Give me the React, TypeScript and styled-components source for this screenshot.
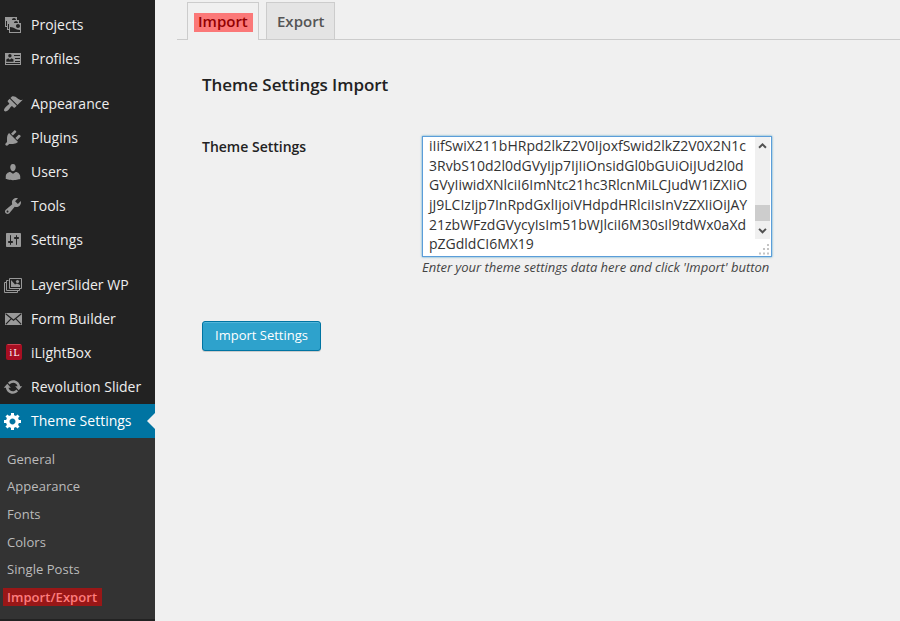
import React from "react";
import styled, { createGlobalStyle } from "styled-components";

const GlobalStyle = createGlobalStyle`
  * { box-sizing: border-box; }
  body {
    margin: 0;
    background: #f0f0f0;
    font-family: "Open Sans", sans-serif;
    color: #333;
    overflow: hidden;
  }
`;

const Page = styled.div`
  display: flex;
  width: 900px;
  height: 621px;
  overflow: hidden;
`;

const Sidebar = styled.nav`
  flex: 0 0 155px;
  background: #222;
  padding-top: 8px;
`;

const MenuGroup = styled.div`
  & + & { margin-top: 11px; }
`;

const MenuItem = styled.a<{ $active?: boolean }>`
  position: relative;
  display: flex;
  align-items: center;
  height: 34px;
  padding-left: 3px;
  gap: 8px;
  font-size: 14px;
  line-height: 18px;
  white-space: nowrap;
  color: ${(p) => (p.$active ? "#fff" : "#eee")};
  background: ${(p) => (p.$active ? "#0074a2" : "transparent")};
  svg {
    flex: none;
    color: ${(p) => (p.$active ? "#fff" : "#999")};
  }
`;

const Pointer = styled.span`
  position: absolute;
  right: 0;
  top: 9px;
  border: 8px solid transparent;
  border-left-width: 0;
  border-right-color: #f0f0f0;
`;

const Submenu = styled.div`
  height: 181px;
  padding: 7px 3px 0;
  background: #333;
`;

const SubItem = styled.a<{ $current?: boolean }>`
  display: flex;
  align-items: center;
  height: 27.6px;
  font-size: 13px;
  line-height: 18px;
  letter-spacing: 0.05px;
  font-weight: ${(p) => (p.$current ? 600 : 400)};
  color: ${(p) => (p.$current ? "#ff7d7d" : "#bbb")};
  span {
    padding: 0 5px 0 4px;
    background: ${(p) => (p.$current ? "#991717" : "transparent")};
  }
`;

const Main = styled.main`
  flex: 1;
  padding: 2px 0 0 22px;
`;

const Tabs = styled.div`
  display: flex;
  gap: 7px;
  height: 38px;
  padding-left: 10px;
  border-bottom: 1px solid #ccc;
`;

const Tab = styled.a<{ $active?: boolean }>`
  width: ${(p) => (p.$active ? 72 : 69)}px;
  height: ${(p) => (p.$active ? 38 : 37)}px;
  display: flex;
  padding: ${(p) => (p.$active ? "10px 0 0 6px" : "9px 0 0 10px")};
  border: 1px solid #ccc;
  border-bottom: 0;
  background: ${(p) => (p.$active ? "#f0f0f0" : "#e4e4e4")};
  color: ${(p) => (p.$active ? "#930000" : "#555")};
  font-size: 15px;
  font-weight: 600;
  line-height: 19px;
`;

const TabMark = styled.span`
  width: 59px;
  height: 19px;
  line-height: 17px;
  padding: 0 4px;
  background: #fb7878;
`;

const Form = styled.section`
  padding: 33px 0 0 25px;
`;

const Title = styled.h3`
  margin: 0;
  font-size: 17px;
  font-weight: 600;
  line-height: 24px;
  letter-spacing: -0.05px;
  color: #222;
`;

const FieldRow = styled.div`
  display: flex;
  margin-top: 39px;
`;

const Label = styled.label`
  width: 220px;
  font-size: 14px;
  font-weight: 600;
  line-height: 21px;
  color: #222;
`;

const TextBox = styled.div`
  display: flex;
  justify-content: space-between;
  width: 350px;
  height: 121px;
  border: 1px solid #5b9dd9;
  box-shadow: 0 0 2px rgba(30, 140, 190, 0.8);
  background: #fff;
  overflow: hidden;
`;

const TextLines = styled.div`
  margin-top: -0.85px;
  padding-left: 6px;
  font-size: 14px;
  line-height: 19.6px;
  white-space: pre;
  color: #333;
`;

const ScrollSide = styled.div`
  flex: none;
  width: 16px;
  display: flex;
  flex-direction: column;
`;

const ScrollTrack = styled.div`
  width: 15px;
  height: 102px;
  display: flex;
  flex-direction: column;
  background: #f0f0f0;
`;

const Thumb = styled.div`
  margin-top: 50px;
  height: 17px;
  background: #cdcdcd;
`;

const Hint = styled.div`
  font-size: 13px;
  font-style: italic;
  line-height: 20px;
  letter-spacing: -0.02px;
  color: #444;
  white-space: nowrap;
`;

const Button = styled.button`
  display: block;
  width: 119px;
  height: 30px;
  margin-top: 44px;
  padding: 0 0 2px;
  border: 1px solid #0074a2;
  border-radius: 3px;
  background: #2ea2cc;
  box-shadow: inset 0 1px 0 rgba(120, 200, 230, 0.5), 0 1px 0 rgba(0, 0, 0, 0.15);
  color: #fff;
  font: 13px "Open Sans", sans-serif;
`;

type IconName =
  | "projects" | "profiles" | "appearance" | "plugins" | "users" | "tools"
  | "settings" | "layers" | "mail" | "ilightbox" | "refresh" | "gear";

const solidPaths: Partial<Record<IconName, string>> = {
  projects:
    "M4 15v-3H2V2h12v3h2v3h2v10H6v-3H4zm7-12c-1.1 0-2 .9-2 2h4c0-1.1-.89-2-2-2zm-7 8V6H3v5h1zm7-3h4c0-1.1-.89-2-2-2-1.1 0-2 .9-2 2zm-5 6V9H5v5h1zm9-1c1.1 0 2-.89 2-2 0-1.1-.9-2-2-2s-2 .9-2 2c0 1.11.9 2 2 2zm2 4v-2c-5 0-5-3-10-3v5h10z",
  appearance:
    "M14.48 11.06L7.41 3.99l1.5-1.5c.5-.56 2.3-.47 3.51.32 1.21.8 1.43 1.28 2.91 2.1 1.18.64 2.45 1.26 4.45.85zm-.71.71L6.7 4.7 4.93 6.47c-.39.39-.39 1.02 0 1.41l1.06 1.06c.39.39.39 1.03 0 1.42-.6.6-1.43 1.11-2.21 1.69-.35.26-.7.53-1.01.84C1.43 14.23.4 16.08 1.4 17.07c.99 1 2.84-.03 4.18-1.36.31-.31.58-.66.85-1.02.57-.78 1.08-1.61 1.69-2.21.39-.39 1.02-.39 1.41 0l1.06 1.06c.39.39 1.02.39 1.41 0z",
  plugins:
    "M13.11 4.36L9.87 7.6 8 5.73l3.24-3.24c.35-.34 1.05-.2 1.56.32.52.51.66 1.21.31 1.55zm-8 1.77l.91-1.12 9.01 9.01-1.19.84c-.71.71-2.63 1.16-3.82 1.16H6.14L4.9 17.26c-.59.59-1.54.59-2.12 0-.59-.58-.59-1.53 0-2.12l1.24-1.24v-3.88c0-1.13.4-3.19 1.09-3.89zm7.26 3.97l3.24-3.24c.34-.35 1.04-.21 1.55.31.52.51.66 1.21.31 1.55l-3.24 3.25z",
  users:
    "M10 9.25c-2.27 0-2.73-3.44-2.73-3.44C7 4.02 7.82 2 9.97 2c2.16 0 2.98 2.02 2.71 3.81 0 0-.41 3.44-2.68 3.44zm0 2.57L12.72 10c2.39 0 4.52 2.33 4.52 4.53v2.49s-3.65 1.13-7.24 1.13c-3.65 0-7.24-1.13-7.24-1.13v-2.49c0-2.25 1.94-4.48 4.47-4.48z",
  tools:
    "M16.68 9.77c-1.34 1.34-3.3 1.67-4.95.99l-5.41 6.52c-.99.99-2.59.99-3.58 0s-.99-2.59 0-3.57l6.52-5.42c-.68-1.65-.35-3.61.99-4.95 1.28-1.28 3.12-1.62 4.72-1.06l-2.89 2.89 2.82 2.82 2.86-2.87c.53 1.58.18 3.39-1.08 4.65zM3.81 16.21c.4.39 1.04.39 1.43 0 .4-.4.4-1.04 0-1.43-.39-.4-1.03-.4-1.43 0-.39.39-.39 1.03 0 1.43z",
  settings:
    "M18 16V4c0-.55-.45-1-1-1H4c-.55 0-1 .45-1 1v12c0 .55.45 1 1 1h13c.55 0 1-.45 1-1zM8 11h1c.55 0 1 .45 1 1s-.45 1-1 1H8v1.5c0 .28-.22.5-.5.5s-.5-.22-.5-.5V13H6c-.55 0-1-.45-1-1s.45-1 1-1h1V5.5c0-.28.22-.5.5-.5s.5.22.5.5V11zm5-2h-1c-.55 0-1-.45-1-1s.45-1 1-1h1V5.5c0-.28.22-.5.5-.5s.5.22.5.5V7h1c.55 0 1 .45 1 1s-.45 1-1 1h-1v5.5c0 .28-.22.5-.5.5s-.5-.22-.5-.5V9z",
  refresh:
    "M10.2 3.28c3.53 0 6.43 2.61 6.92 6h2.08l-3.5 4-3.5-4h2.32c-.45-1.97-2.21-3.45-4.32-3.45-1.45 0-2.73.71-3.54 1.78L4.95 5.66C6.23 4.2 8.11 3.28 10.2 3.28zm-.4 13.44c-3.52 0-6.43-2.61-6.92-6H.8l3.5-4c1.17 1.33 2.33 2.67 3.5 4H5.48c.45 1.97 2.21 3.45 4.32 3.45 1.45 0 2.73-.71 3.54-1.78l1.71 1.95c-1.28 1.46-3.15 2.38-5.25 2.38z",
  gear:
    "M18 12h-2.18c-.17.7-.44 1.35-.81 1.93l1.54 1.54-2.1 2.1-1.54-1.54c-.58.36-1.23.63-1.91.79V19H8v-2.18c-.68-.16-1.33-.43-1.91-.79l-1.54 1.54-2.12-2.12 1.54-1.54c-.36-.58-.63-1.23-.79-1.91H1V9.03h2.17c.16-.7.44-1.35.8-1.94L2.43 5.55l2.1-2.1 1.54 1.54c.58-.37 1.24-.64 1.93-.81V2h3v2.18c.68.16 1.33.43 1.91.79l1.54-1.54 2.12 2.12-1.54 1.54c.36.59.64 1.24.8 1.94H18V12zm-8.5 1.5c1.66 0 3-1.34 3-3s-1.34-3-3-3-3 1.34-3 3 1.34 3 3 3z",
};

const bg = "#222";

const drawings: Partial<Record<IconName, React.ReactNode>> = {
  profiles: (
    <>
      <path d="M2 4h16v12H2z" fill="currentColor" />
      <circle cx="6.9" cy="6.8" r="1.7" fill={bg} />
      <path d="M3.3 12.8v-2.4l2-1.2 1.6 1.6 1.6-1.6 2 1.2v2.4zM11 6h6v1h-6zM12 9h5v1h-5zM12 12h5v1h-5zM3 14h14v1H3z" fill={bg} />
    </>
  ),
  layers: (
    <>
      <path d="M3.5 7.5h-2v10h13v-2M5.5 5.5h-2v10h13v-2" fill="none" stroke="currentColor" />
      <path d="M6.5 3.5h12v10h-12z" fill={bg} stroke="currentColor" />
      <path d="M8 5l4 4.5 2-1 3 1.5v2H8z" fill="currentColor" />
      <circle cx="14.5" cy="6.5" r="1.6" fill="currentColor" />
    </>
  ),
  mail: (
    <>
      <path d="M2 4h17v12H2z" fill="currentColor" />
      <path d="M3 5l7.5 6.3L18 5M3.2 14.8L8 9.8M17.8 14.8L13 9.8" fill="none" stroke={bg} strokeWidth="1.2" strokeLinecap="round" />
    </>
  ),
  ilightbox: (
    <>
      <rect x="3" y="1" width="16" height="16" rx="2" fill="#a80f22" />
      <path d="M4.5 1.5h13" stroke="#c94552" />
      <text x="6.5" y="13" fill="#fff" fontFamily="Liberation Serif, serif" fontSize="10" textLength="10">iL</text>
    </>
  ),
};

function Icon({ name }: { name: IconName }) {
  const path = solidPaths[name];
  return (
    <svg width="20" height="20" viewBox="0 0 20 20" aria-hidden="true">
      {path ? <path d={path} fill="currentColor" /> : drawings[name]}
    </svg>
  );
}

const groups: { icon: IconName; label: string; active?: boolean }[][] = [
  [
    { icon: "projects", label: "Projects" },
    { icon: "profiles", label: "Profiles" },
  ],
  [
    { icon: "appearance", label: "Appearance" },
    { icon: "plugins", label: "Plugins" },
    { icon: "users", label: "Users" },
    { icon: "tools", label: "Tools" },
    { icon: "settings", label: "Settings" },
  ],
  [
    { icon: "layers", label: "LayerSlider WP" },
    { icon: "mail", label: "Form Builder" },
    { icon: "ilightbox", label: "iLightBox" },
    { icon: "refresh", label: "Revolution Slider" },
    { icon: "gear", label: "Theme Settings", active: true },
  ],
];

const subItems = ["General", "Appearance", "Fonts", "Colors", "Single Posts", "Import/Export"];

const dataLines = [
  "iIifSwiX211bHRpd2lkZ2V0IjoxfSwid2lkZ2V0X2N1c",
  "3RvbS10d2l0dGVyIjp7IjIiOnsidGl0bGUiOiJUd2l0d",
  "GVyIiwidXNlciI6ImNtc21hc3RlcnMiLCJudW1iZXIiO",
  "jJ9LCIzIjp7InRpdGxlIjoiVHdpdHRlciIsInVzZXIiOiJAY",
  "21zbWFzdGVycyIsIm51bWJlciI6M30sIl9tdWx0aXd",
  "pZGdldCI6MX19",
];

function Chevron({ up }: { up?: boolean }) {
  return (
    <svg width="15" height="18" viewBox="0 0 15 18" aria-hidden="true">
      <path d={up ? "M4 11l3.5-3.5L11 11" : "M4 8L7.5 11.5 11 8"} fill="none" stroke="#505050" strokeWidth="2" />
    </svg>
  );
}

function Grip() {
  return (
    <svg width="15" height="17" viewBox="0 0 15 17" aria-hidden="true">
      <path d="M12 5h2v2h-2zM8 9h2v2H8zM12 9h2v2h-2zM4 13.5h2v2H4zM8 13.5h2v2H8zM12 13.5h2v2h-2z" fill="#c4c4c4" />
    </svg>
  );
}

export default function App() {
  return (
    <Page>
      <GlobalStyle />
      <Sidebar>
        {groups.map((group, i) => (
          <MenuGroup key={i}>
            {group.map((item) => (
              <MenuItem key={item.label} $active={item.active}>
                <Icon name={item.icon} />
                <span>{item.label}</span>
                {item.active && <Pointer />}
              </MenuItem>
            ))}
          </MenuGroup>
        ))}
        <Submenu>
          {subItems.map((label) => (
            <SubItem key={label} $current={label === "Import/Export"}>
              <span>{label}</span>
            </SubItem>
          ))}
        </Submenu>
      </Sidebar>
      <Main>
        <Tabs>
          <Tab $active><TabMark>Import</TabMark></Tab>
          <Tab>Export</Tab>
        </Tabs>
        <Form>
          <Title>Theme Settings Import</Title>
          <FieldRow>
            <Label>Theme Settings</Label>
            <div>
              <TextBox>
                <TextLines>
                  {dataLines.map((line) => <div key={line}>{line}</div>)}
                </TextLines>
                <ScrollSide>
                  <ScrollTrack>
                    <Chevron up />
                    <Thumb />
                    <Chevron />
                  </ScrollTrack>
                  <Grip />
                </ScrollSide>
              </TextBox>
              <Hint>Enter your theme settings data here and click 'Import' button</Hint>
            </div>
          </FieldRow>
          <Button>Import Settings</Button>
        </Form>
      </Main>
    </Page>
  );
}
